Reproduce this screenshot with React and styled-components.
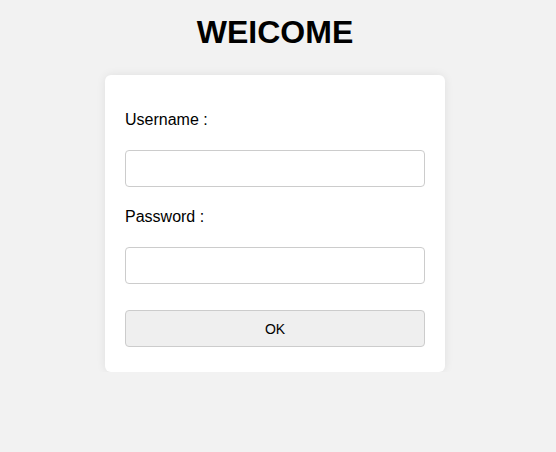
import React from 'react';
import styled, { createGlobalStyle } from 'styled-components';

const GlobalStyle = createGlobalStyle`
  body {
    margin: 0;
    background: #f2f2f2;
    font-family: 'Liberation Sans', Arial, sans-serif;
  }
`

const Page = styled.main`
  width: 550px;
  display: flex;
  flex-direction: column;
  align-items: center;
`

const Title = styled.h1`
  margin: 14px 0 24px;
  font-size: 32px;
  line-height: 37px;
  font-weight: bold;
  color: #000;
`

const Card = styled.form`
  width: 340px;
  box-sizing: border-box;
  padding: 34px 20px 25px;
  background: #fff;
  border-radius: 6px;
  box-shadow: 0 0 10px rgba(0, 0, 0, 0.08);
  display: flex;
  flex-direction: column;
`

const Label = styled.label`
  display: block;
  font-size: 16px;
  line-height: 18px;
  color: #000;
  padding-top: 2px;
  margin-bottom: 21px;
`

const Input = styled.input`
  box-sizing: border-box;
  width: 100%;
  height: 37px;
  margin: 0 0 ${p => p.$gap}px;
  padding: 0 10px;
  border: 1px solid #ccc;
  border-radius: 4px;
  font-size: 14px;
  background: #fff;
`

const Button = styled.button`
  box-sizing: border-box;
  width: 100%;
  height: 37px;
  border: 1px solid #ccc;
  border-radius: 4px;
  background: #efefef;
  color: #000;
  font-size: 14px;
  font-family: 'Liberation Sans', Arial, sans-serif;
`

const App = () => {
  return (
    <Page>
      <GlobalStyle />
      <Title>WEICOME</Title>
      <Card onSubmit={e => e.preventDefault()}>
        <Label htmlFor="username">Username :</Label>
        <Input id="username" type="text" $gap={19} />
        <Label htmlFor="password">Password :</Label>
        <Input id="password" type="password" $gap={26} />
        <Button type="submit">OK</Button>
      </Card>
    </Page>
  )
}

export default App
